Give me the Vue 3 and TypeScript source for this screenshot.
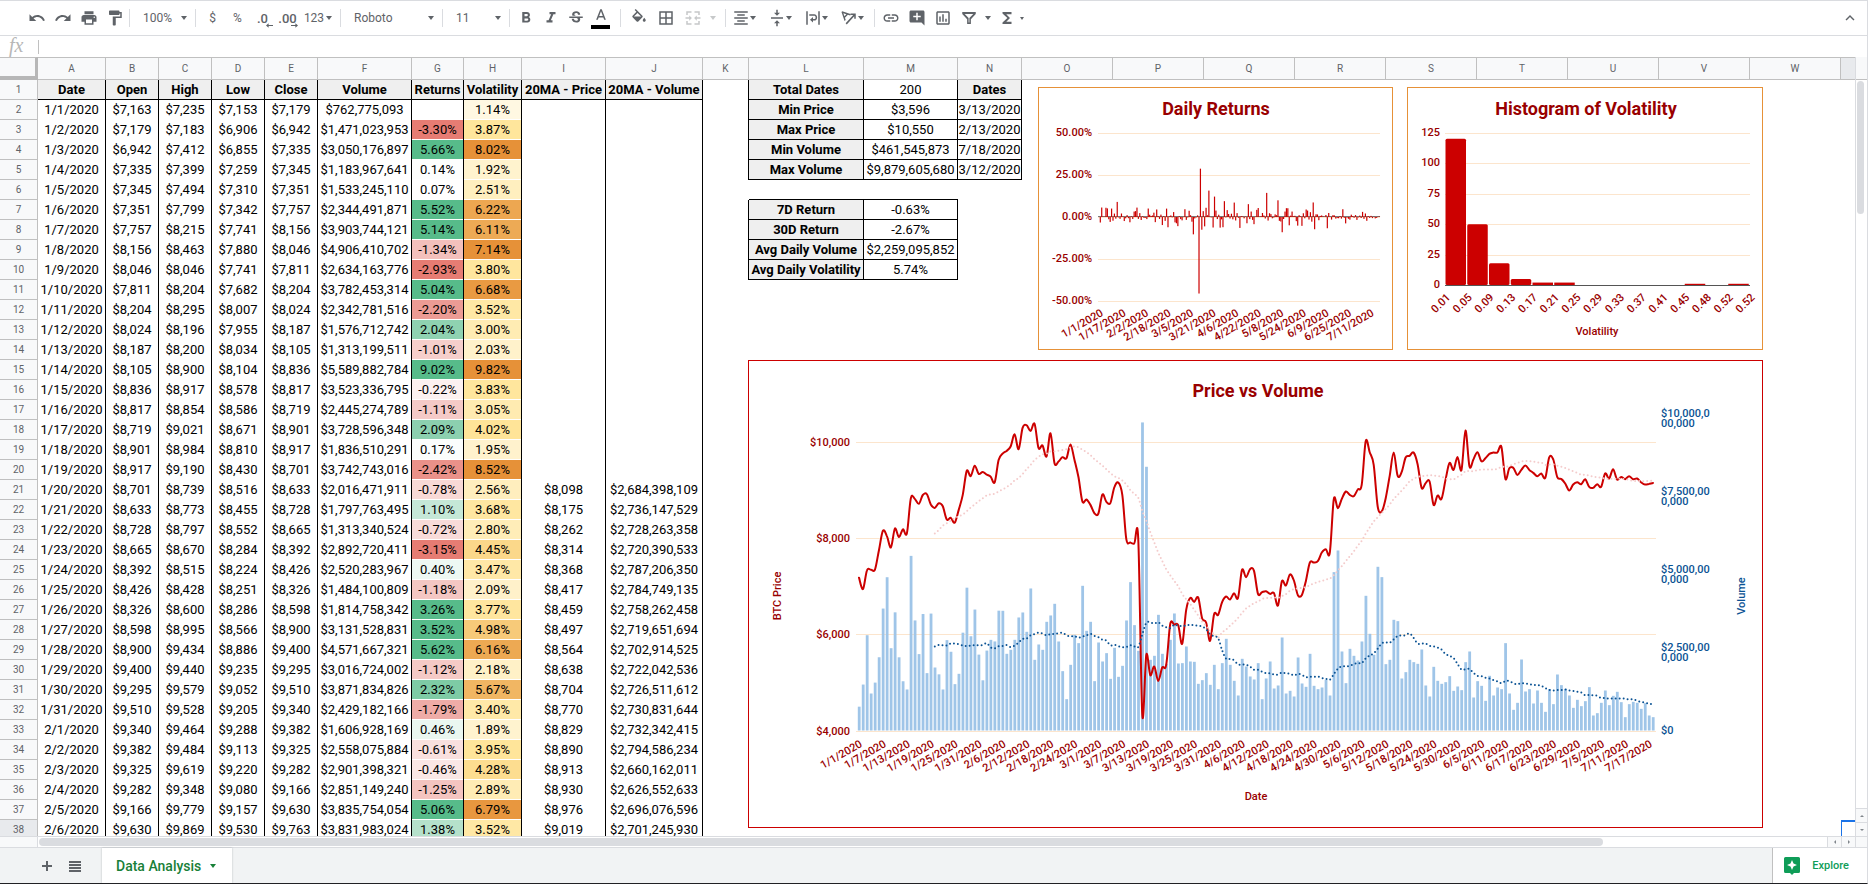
<script setup lang="ts">
interface Cell {
  text: string
  cls: string
  fill?: string
}

const columns = [
  { name: 'A', cls: 'w-date' },
  { name: 'B', cls: 'w-price' },
  { name: 'C', cls: 'w-price' },
  { name: 'D', cls: 'w-price' },
  { name: 'E', cls: 'w-price' },
  { name: 'F', cls: 'w-volume' },
  { name: 'G', cls: 'w-returns' },
  { name: 'H', cls: 'w-volatility' },
  { name: 'I', cls: 'w-ma-price' },
  { name: 'J', cls: 'w-ma-volume' },
  { name: 'K', cls: 'w-gap' },
  { name: 'L', cls: 'w-label' },
  { name: 'M', cls: 'w-volume' },
  { name: 'N', cls: 'w-dates' },
  ...'OPQRSTUVW'.split('').map((name) => ({ name, cls: 'w-plain' })),
  { name: '', cls: 'w-plain' },
]

// date, open, high, low, close, volume, return %, volatility %, 20-day price, 20-day volume
type Day = [string, number, number, number, number, number, number | null, number, number?, number?]

const days: Day[] = [
  ['1/1/2020', 7163, 7235, 7153, 7179, 762775093, null, 1.14],
  ['1/2/2020', 7179, 7183, 6906, 6942, 1471023953, -3.3, 3.87],
  ['1/3/2020', 6942, 7412, 6855, 7335, 3050176897, 5.66, 8.02],
  ['1/4/2020', 7335, 7399, 7259, 7345, 1183967641, 0.14, 1.92],
  ['1/5/2020', 7345, 7494, 7310, 7351, 1533245110, 0.07, 2.51],
  ['1/6/2020', 7351, 7799, 7342, 7757, 2344491871, 5.52, 6.22],
  ['1/7/2020', 7757, 8215, 7741, 8156, 3903744121, 5.14, 6.11],
  ['1/8/2020', 8156, 8463, 7880, 8046, 4906410702, -1.34, 7.14],
  ['1/9/2020', 8046, 8046, 7741, 7811, 2634163776, -2.93, 3.8],
  ['1/10/2020', 7811, 8204, 7682, 8204, 3782453314, 5.04, 6.68],
  ['1/11/2020', 8204, 8295, 8007, 8024, 2342781516, -2.2, 3.52],
  ['1/12/2020', 8024, 8196, 7955, 8187, 1576712742, 2.04, 3.0],
  ['1/13/2020', 8187, 8200, 8034, 8105, 1313199511, -1.01, 2.03],
  ['1/14/2020', 8105, 8900, 8104, 8836, 5589882784, 9.02, 9.82],
  ['1/15/2020', 8836, 8917, 8578, 8817, 3523336795, -0.22, 3.83],
  ['1/16/2020', 8817, 8854, 8586, 8719, 2445274789, -1.11, 3.05],
  ['1/17/2020', 8719, 9021, 8671, 8901, 3728596348, 2.09, 4.02],
  ['1/18/2020', 8901, 8984, 8810, 8917, 1836510291, 0.17, 1.95],
  ['1/19/2020', 8917, 9190, 8430, 8701, 3742743016, -2.42, 8.52],
  ['1/20/2020', 8701, 8739, 8516, 8633, 2016471911, -0.78, 2.56, 8098, 2684398109],
  ['1/21/2020', 8633, 8773, 8455, 8728, 1797763495, 1.1, 3.68, 8175, 2736147529],
  ['1/22/2020', 8728, 8797, 8552, 8665, 1313340524, -0.72, 2.8, 8262, 2728263358],
  ['1/23/2020', 8665, 8670, 8284, 8392, 2892720411, -3.15, 4.45, 8314, 2720390533],
  ['1/24/2020', 8392, 8515, 8224, 8426, 2520283967, 0.4, 3.47, 8368, 2787206350],
  ['1/25/2020', 8426, 8428, 8251, 8326, 1484100809, -1.18, 2.09, 8417, 2784749135],
  ['1/26/2020', 8326, 8600, 8286, 8598, 1814758342, 3.26, 3.77, 8459, 2758262458],
  ['1/27/2020', 8598, 8995, 8566, 8900, 3131528831, 3.52, 4.98, 8497, 2719651694],
  ['1/28/2020', 8900, 9434, 8886, 9400, 4571667321, 5.62, 6.16, 8564, 2702914525],
  ['1/29/2020', 9400, 9440, 9235, 9295, 3016724002, -1.12, 2.18, 8638, 2722042536],
  ['1/30/2020', 9295, 9579, 9052, 9510, 3871834826, 2.32, 5.67, 8704, 2726511612],
  ['1/31/2020', 9510, 9528, 9205, 9340, 2429182166, -1.79, 3.4, 8770, 2730831644],
  ['2/1/2020', 9340, 9464, 9288, 9382, 1606928169, 0.46, 1.89, 8829, 2732342415],
  ['2/2/2020', 9382, 9484, 9113, 9325, 2558075884, -0.61, 3.95, 8890, 2794586234],
  ['2/3/2020', 9325, 9619, 9220, 9282, 2901398321, -0.46, 4.28, 8913, 2660162011],
  ['2/4/2020', 9282, 9348, 9080, 9166, 2851149240, -1.25, 2.89, 8930, 2626552633],
  ['2/5/2020', 9166, 9779, 9157, 9630, 3835754054, 5.06, 6.79, 8976, 2696076596],
  ['2/6/2020', 9630, 9869, 9530, 9763, 3831983024, 1.38, 3.52, 9019, 2701245930],
]

const money = (n?: number) => (n === undefined ? '' : '$' + n.toLocaleString('en-US'))
const percent = (n: number) => n.toFixed(2) + '%'

function blend(a: number[], b: number[], t: number): string {
  const k = Math.min(1, Math.max(0, t))
  return `rgb(${a.map((v, i) => Math.round(v + (b[i] - v) * k)).join(', ')})`
}
const white = [255, 255, 255]
const returnFill = (n: number) =>
  n < 0.1 ? blend(white, [230, 124, 115], (0.1 - n) / 3) : blend(white, [87, 187, 138], (n - 0.1) / 2.9)
const volatilityFill = (n: number) =>
  n < 4
    ? blend(white, [255, 229, 153], n / 4)
    : blend([255, 229, 153], [230, 145, 56], (n - 4) / 3)

const headings = ['Date', 'Open', 'High', 'Low', 'Close', 'Volume', 'Returns', 'Volatility', '20MA - Price', '20MA - Volume']

const stats: Record<number, string[]> = {
  1: ['Total Dates', '200', 'Dates'],
  2: ['Min Price', '$3,596', '3/13/2020'],
  3: ['Max Price', '$10,550', '2/13/2020'],
  4: ['Min Volume', '$461,545,873', '7/18/2020'],
  5: ['Max Volume', '$9,879,605,680', '3/12/2020'],
  7: ['7D Return', '-0.63%'],
  8: ['30D Return', '-2.67%'],
  9: ['Avg Daily Volume', '$2,259,095,852'],
  10: ['Avg Daily Volatility', '5.74%'],
}

function buildRow(n: number): Cell[] {
  const cells: Cell[] = []
  if (n === 1) {
    headings.forEach((text) => cells.push({ text, cls: 'head edge-r edge-b' }))
  } else {
    const d = days[n - 2]
    cells.push({ text: d[0], cls: 'edge-r' })
    for (const v of [d[1], d[2], d[3], d[4], d[5]]) cells.push({ text: money(v), cls: 'edge-r' })
    cells.push(d[6] === null ? { text: '', cls: 'edge-r' } : { text: percent(d[6]), cls: 'edge-r filled', fill: returnFill(d[6]) })
    cells.push({ text: percent(d[7]), cls: 'edge-r filled', fill: volatilityFill(d[7]) })
    cells.push({ text: money(d[8]), cls: 'edge-r' })
    cells.push({ text: money(d[9]), cls: 'edge-r' })
  }
  const s = stats[n]
  cells.push({ text: '', cls: s ? 'edge-r' : '' })
  for (let i = 0; i < 3; i++) {
    if (s && s[i]) cells.push({ text: s[i], cls: 'edge-r edge-b' + (i === 0 || s[i] === 'Dates' ? ' head' : '') })
    else cells.push({ text: '', cls: n === 6 && i < 2 ? 'edge-b' : '' })
  }
  for (let i = 0; i < 10; i++) cells.push({ text: '', cls: n === 38 && i === 9 ? 'selected' : '' })
  return cells
}
const rows = Array.from({ length: 38 }, (_, i) => ({ n: i + 1, cells: buildRow(i + 1) }))

// Closing level per day after 2/6, in thirds of a pixel below the plot's upper edge
const closeLevels = [
  303, 290, 253, 298, 234, 226, 243, 222, 294, 287, 320, 250, 340, 335, 322, 325, 284, 330, 382, 455, 449, 465, 490, 491,
  434, 456, 459, 412, 398, 435, 568, 578, 581, 570, 1095, 915, 976, 950, 993, 953, 945, 823, 824, 826, 882, 780, 744,
  756, 743, 805, 818, 873, 793, 795, 757, 740, 749, 730, 744, 660, 682, 658, 663, 732, 727, 724, 732, 730, 767, 694,
  707, 674, 692, 736, 735, 693, 638, 638, 634, 608, 598, 608, 448, 475, 447, 425, 435, 439, 419, 405, 274, 307, 345,
  470, 485, 445, 378, 308, 378, 367, 323, 318, 308, 343, 414, 400, 395, 465, 437, 447, 390, 339, 360, 321, 360, 242,
  350, 328, 307, 334, 325, 312, 308, 308, 291, 387, 355, 354, 375, 360, 347, 360, 369, 379, 371, 384, 322, 329, 382,
  387, 401, 422, 404, 397, 403, 388, 411, 414, 403, 411, 371, 386, 358, 389, 381, 388, 379, 388, 386, 397, 404, 402,
  399,
]
// Volume per day after 2/6, where 937 steps stand for ten billion dollars
const volumeSteps = [
  230, 242, 272, 339, 354, 296, 426, 212, 258, 242, 326, 345, 380, 267, 178, 94, 197, 287, 262, 434, 299, 326, 148, 264,
  207, 232, 155, 248, 161, 194, 330, 445, 316, 239, 924, 791, 212, 224, 347, 230, 200, 272, 351, 201, 202, 252, 207,
  206, 140, 151, 172, 137, 197, 124, 202, 275, 197, 149, 105, 215, 192, 162, 153, 202, 94, 156, 207, 126, 135, 279, 111,
  119, 102, 219, 141, 131, 230, 134, 124, 129, 152, 105, 475, 540, 237, 142, 245, 224, 210, 267, 404, 290, 227, 491,
  460, 199, 212, 332, 328, 156, 175, 212, 205, 200, 243, 135, 102, 191, 149, 140, 145, 163, 119, 132, 121, 205, 237, 99,
  148, 134, 89, 164, 105, 129, 124, 262, 111, 62, 83, 213, 117, 124, 81, 120, 83, 56, 124, 79, 168, 136, 125, 105, 68,
  92, 73, 88, 130, 45, 52, 83, 120, 76, 104, 116, 85, 40, 79, 86, 83, 65, 82, 45, 40,
]

const prices = [...days.map((d) => d[4]), ...closeLevels.map((y) => 10000 - ((y - 277) / 288.3) * 2000)]
const volumes = [...days.map((d) => d[5] / 1e9), ...volumeSteps.map((v) => v / 93.7)]

const dayX = (i: number) => 859 + i * 3.99
const priceY = (p: number) => 730.5 - (p - 4000) * 0.04805
const volumeY = (v: number) => 730.5 - v * 31.24

type Point = [number, number]
function smooth(points: Point[]): string {
  let d = `M${points[0][0].toFixed(1)} ${points[0][1].toFixed(1)}`
  for (let i = 0; i < points.length - 1; i++) {
    const a = points[Math.max(0, i - 1)]
    const b = points[i]
    const c = points[i + 1]
    const e = points[Math.min(points.length - 1, i + 2)]
    d += `C${[b[0] + (c[0] - a[0]) / 6, b[1] + (c[1] - a[1]) / 6, c[0] - (e[0] - b[0]) / 6, c[1] - (e[1] - b[1]) / 6, c[0], c[1]]
      .map((v) => v.toFixed(1))
      .join(' ')}`
  }
  return d
}
function average(series: number[]): number[] {
  return series.slice(19).map((_, i) => series.slice(i, i + 20).reduce((s, v) => s + v, 0) / 20)
}
const pricePath = smooth(prices.map((p, i) => [dayX(i), priceY(p)] as Point))
const priceMaPath = smooth(average(prices).map((p, i) => [dayX(i + 19), priceY(p)] as Point))
const volumeMaPath = smooth(average(volumes).map((v, i) => [dayX(i + 19), volumeY(v)] as Point))

const dateLabel = (i: number) => {
  const d = new Date(Date.UTC(2020, 0, 1 + i))
  return `${d.getUTCMonth() + 1}/${d.getUTCDate()}/${d.getUTCFullYear()}`
}
const priceDates = Array.from({ length: 34 }, (_, k) => ({ text: dateLabel(k * 6), x: dayX(k * 6) + 4 }))
const priceTicks = [10000, 8000, 6000, 4000].map((v) => ({ text: money(v), y: Math.round(priceY(v)) }))
const volumeTicks = [
  { a: '$10,000,0', b: '00,000', y: 417 },
  { a: '$7,500,00', b: '0,000', y: 495 },
  { a: '$5,000,00', b: '0,000', y: 573 },
  { a: '$2,500,00', b: '0,000', y: 651 },
  { a: '$0', b: '', y: 734 },
]

const returnBars = prices.slice(1).map((p, i) => {
  const known = days[i + 1]?.[6]
  const r = known ?? (p / prices[i] - 1) * 100
  const h = Math.abs(r) * 1.674
  return { x: 1098.3 + (i + 1) * 1.41, y: r > 0 ? 217 - h : 217, h }
})
const returnTicks = [50, 25, 0, -25, -50].map((v, i) => ({ text: percent(v), y: 133 + i * 42 }))
const returnDates = Array.from({ length: 13 }, (_, k) => ({ text: dateLabel(k * 16), x: 1104 + k * 22.56 }))

const bins = [120.5, 50, 18, 5, 2, 2, 0, 0, 0, 0, 0, 1, 0, 1].map((v, i) => ({ x: 1445.5 + i * 21.75, h: v * 1.214 }))
const binTicks = [125, 100, 75, 50, 25, 0].map((v, i) => ({ text: String(v), y: 133 + Math.round(i * 30.4) }))
const binLabels = ['0.01', '0.05', '0.09', '0.13', '0.17', '0.21', '0.25', '0.29', '0.33', '0.37', '0.41', '0.45', '0.48', '0.52', '0.52']
  .map((text, i) => ({ text, x: 1451 + i * 21.75 }))

const icons: Record<string, string> = {
  Undo: 'M12.5 8c-2.65 0-5.05.99-6.9 2.6L2 7v9h9l-3.62-3.62c1.39-1.16 3.16-1.88 5.12-1.88 3.54 0 6.55 2.31 7.6 5.5l2.37-.78C21.08 11.03 17.15 8 12.5 8z',
  Redo: 'M18.4 10.6C16.55 8.99 14.15 8 11.5 8c-4.65 0-8.58 3.03-9.96 7.22L3.9 16c1.05-3.19 4.05-5.5 7.6-5.5 1.95 0 3.73.72 5.12 1.88L13 16h9V7l-3.6 3.6z',
  Print: 'M19 8H5c-1.66 0-3 1.34-3 3v6h4v4h12v-4h4v-6c0-1.66-1.34-3-3-3zm-3 11H8v-5h8v5zm3-7c-.55 0-1-.45-1-1s.45-1 1-1 1 .45 1 1-.45 1-1 1zm-1-9H6v4h12V3z',
  'Paint format': 'M18 4V3c0-.55-.45-1-1-1H5c-.55 0-1 .45-1 1v4c0 .55.45 1 1 1h12c.55 0 1-.45 1-1V6h1v4H9v11c0 .55.45 1 1 1h2c.55 0 1-.45 1-1v-9h8V4h-3z',
  Bold: 'M15.6 10.79c.97-.67 1.65-1.77 1.65-2.79 0-2.26-1.75-4-4-4H7v14h7.04c2.09 0 3.71-1.7 3.71-3.79 0-1.52-.86-2.82-2.15-3.42zM10 6.5h3c.83 0 1.5.67 1.5 1.5s-.67 1.5-1.5 1.5h-3v-3zm3.5 9H10v-3h3.5c.83 0 1.5.67 1.5 1.5s-.67 1.5-1.5 1.5z',
  Italic: 'M10 4v3h2.21l-3.42 8H6v3h8v-3h-2.21l3.42-8H18V4z',
  Strikethrough: 'M6.85 7.08C6.85 4.37 9.45 3 12.24 3c1.64 0 3 .49 3.9 1.28.77.65 1.46 1.73 1.46 3.24h-3.01c0-.31-.05-.59-.15-.85-.29-.86-1.2-1.28-2.25-1.28-1.86 0-2.34 1.02-2.34 1.7 0 .48.25.88.74 1.21.38.25.77.48 1.41.7H7.39c-.21-.34-.54-.89-.54-1.92zM21 12v-2H3v2h9.62c1.15.45 1.96.75 1.96 1.97 0 1-.81 1.67-2.28 1.67-1.54 0-2.93-.54-2.93-2.51H6.4c0 .55.08 1.13.24 1.58.81 2.29 3.29 3.3 5.67 3.3 2.27 0 5.3-.89 5.3-4.05 0-.3-.01-1.16-.48-1.94H21V12z',
  Fill: 'M16.56 8.94L7.62 0 6.21 1.41l2.38 2.38-5.15 5.15c-.59.59-.59 1.54 0 2.12l5.5 5.5c.29.29.68.44 1.06.44s.77-.15 1.06-.44l5.5-5.5c.59-.58.59-1.53 0-2.12zM5.21 10L10 5.21 14.79 10H5.21zM19 11.5s-2 2.17-2 3.5c0 1.1.9 2 2 2s2-.9 2-2c0-1.33-2-3.5-2-3.5z',
  Borders: 'M3 3v18h18V3H3zm8 16H5v-6h6v6zm0-8H5V5h6v6zm8 8h-6v-6h6v6zm0-8h-6V5h6v6z',
  'Horizontal align': 'M7 15v2h10v-2H7zm-4 6h18v-2H3v2zm0-8h18v-2H3v2zm4-6v2h10V7H7zM3 3v2h18V3H3z',
  'Vertical align': 'M8 19h3v4h2v-4h3l-4-4-4 4zm8-14h-3V1h-2v4H8l4 4 4-4zM4 11v2h16v-2H4z',
  'Text wrapping': 'M3 3h2v18H3zM19 3h2v18h-2zM7 7h6.5c2.5 0 4 1.8 4 4.2s-1.5 4.2-4 4.2H12V18l-4-3.6 4-3.6v2.6h1.5c1.3 0 2-.9 2-2.2s-.7-2.2-2-2.2H7z',
  'Text rotation': 'M2 4l1-1 12 4-1.5 1.5-3-1L6.6 11.5l1 3L6.1 16zM4.5 5.5l1.4 4 2.6-2.600zM9 20.5L19 9.5V13h2V6h-7v2h3.6L7.5 19z',
  'Insert link': 'M3.9 12c0-1.71 1.39-3.1 3.1-3.1h4V7H7c-2.76 0-5 2.24-5 5s2.24 5 5 5h4v-1.9H7c-1.71 0-3.1-1.39-3.1-3.1zM8 13h8v-2H8v2zm9-6h-4v1.9h4c1.71 0 3.1 1.39 3.1 3.1s-1.39 3.1-3.1 3.1h-4V17h4c2.76 0 5-2.24 5-5s-2.24-5-5-5z',
  'Insert comment': 'M21.99 4c0-1.1-.89-2-1.99-2H4c-1.1 0-2 .9-2 2v12c0 1.1.9 2 2 2h14l4 4-.01-18zM17 11h-4v4h-2v-4H7V9h4V5h2v4h4v2z',
  'Insert chart': 'M9 17H7v-7h2v7zm4 0h-2V7h2v10zm4 0h-2v-4h2v4zm2 2H5V5h14v14zm0-16H5c-1.1 0-2 .9-2 2v14c0 1.1.9 2 2 2h14c1.1 0 2-.9 2-2V5c0-1.1-.9-2-2-2z',
  Filter: 'M3 4h18v2.5l-6.5 7V20h-5v-6.5L3 6.5zM6.3 6.5l5.2 5.6v5.9h1v-5.9l5.2-5.6z',
  Functions: 'M18 4H6v2l6.5 6L6 18v2h12v-3h-7l5-5-5-5h7z',
}
const historyTools = ['Undo', 'Redo', 'Print', 'Paint format']
const styleTools = ['Bold', 'Italic', 'Strikethrough']
const alignTools = ['Horizontal align', 'Vertical align', 'Text wrapping', 'Text rotation']
const insertTools = ['Insert link', 'Insert comment', 'Insert chart', 'Filter']
</script>

<template>
  <div class="app">
    <header class="toolbar">
      <button v-for="t in historyTools" :key="t" class="tool wide" :aria-label="t">
        <svg class="icon" viewBox="0 0 24 24"><path :d="icons[t]" /></svg>
      </button>
      <i class="sep tight"></i>
      <label class="picker zoom"><select aria-label="Zoom"><option>100%</option></select><i class="caret"></i></label>
      <i class="sep"></i>
      <div class="group">
        <button class="tool text">$</button>
        <button class="tool text">%</button>
        <button class="tool text dec">.0<svg class="arrow" viewBox="0 0 8 5"><path d="M0 2.5L3 0v2h5v1H3v2z" /></svg></button>
        <button class="tool text dec">.00<svg class="arrow" viewBox="0 0 8 5"><path d="M8 2.5L5 0v2H0v1h5v2z" /></svg></button>
        <button class="tool formats">123<i class="caret"></i></button>
      </div>
      <i class="sep"></i>
      <label class="picker font"><select aria-label="Font"><option>Roboto</option></select><i class="caret"></i></label>
      <i class="sep"></i>
      <label class="picker size"><select aria-label="Font size"><option>11</option></select><i class="caret"></i></label>
      <i class="sep"></i>
      <div class="group style-group">
        <button v-for="t in styleTools" :key="t" class="tool" :aria-label="t">
          <svg class="icon" viewBox="0 0 24 24"><path :d="icons[t]" /></svg>
        </button>
        <button class="tool ink" aria-label="Text color">
          <svg class="icon" viewBox="0 0 24 24"><path d="M11 3L5.5 17h2.25l1.12-3h6.25l1.12 3h2.25L13 3h-2zm-1.38 9L12 5.67 14.38 12H9.62z" /></svg>
          <i class="ink-bar"></i>
        </button>
      </div>
      <i class="sep"></i>
      <div class="group">
        <button class="tool roomy" aria-label="Fill color"><svg class="icon" viewBox="0 0 24 24"><path :d="icons.Fill" /></svg></button>
        <button class="tool roomy" aria-label="Borders"><svg class="icon" viewBox="0 0 24 24"><path :d="icons.Borders" /></svg></button>
        <button class="tool roomy faded" aria-label="Merge cells" disabled>
          <svg class="icon" viewBox="0 0 24 24">
            <path d="M3 3h7v2H5v3H3zM14 3h7v5h-2V5h-5zM3 16h2v3h5v2H3zM19 16h2v5h-7v-2h5zM2 11h5V8.5l3.5 3.5L7 15.5V13H2zM22 11h-5V8.5L13.5 12l3.5 3.5V13h5z" />
          </svg>
        </button>
        <i class="caret faded merge-caret"></i>
      </div>
      <i class="sep"></i>
      <div class="group">
        <button v-for="t in alignTools" :key="t" class="tool paired" :aria-label="t">
          <svg class="icon" viewBox="0 0 24 24"><path :d="icons[t]" /></svg><i class="caret"></i>
        </button>
      </div>
      <i class="sep"></i>
      <div class="group insert-group">
        <button v-for="t in insertTools" :key="t" class="tool wide" :aria-label="t">
          <svg class="icon" viewBox="0 0 24 24"><path :d="icons[t]" /></svg>
        </button>
        <i class="caret filter-caret"></i>
        <button class="tool wide" aria-label="Functions"><svg class="icon" viewBox="0 0 24 24"><path :d="icons.Functions" /></svg></button>
        <i class="caret small"></i>
      </div>
      <button class="tool wide collapse" aria-label="Hide the menus">
        <svg class="icon" viewBox="0 0 24 24"><path d="M12 8l-6 6 1.41 1.41L12 10.83l4.59 4.58L18 14z" /></svg>
      </button>
    </header>

    <div class="formula">
      <label class="fx" for="formula-input">fx</label>
      <input id="formula-input" type="text" />
    </div>

    <main class="body">
      <div class="sheet">
        <table>
          <colgroup>
            <col class="w-row" />
            <col v-for="c in columns" :key="c.name" :class="c.cls" />
          </colgroup>
          <thead>
            <tr>
              <td class="corner"></td>
              <th v-for="c in columns" :key="c.name" scope="col" :class="{ current: c.name === '' }">{{ c.name }}</th>
            </tr>
          </thead>
          <tbody>
            <tr v-for="r in rows" :key="r.n">
              <th scope="row" :class="{ current: r.n === 38 }">{{ r.n }}</th>
              <td v-for="(c, i) in r.cells" :key="i" :class="c.cls" :style="c.fill ? { backgroundColor: c.fill } : undefined">{{ c.text }}</td>
            </tr>
          </tbody>
        </table>

        <section class="chart returns">
          <svg viewBox="1039 88 353 261">
            <text class="title" x="1216" y="115" text-anchor="middle">Daily Returns</text>
            <g v-for="t in returnTicks" :key="t.text">
              <rect class="rule" x="1098" :y="t.y" width="282" height="1" />
              <text x="1092" :y="t.y + 3" text-anchor="end">{{ t.text }}</text>
            </g>
            <rect x="1098" y="216" width="282" height="1" fill="#777" />
            <rect v-for="(b, i) in returnBars" :key="i" class="bar-red" :x="b.x" :y="b.y" width="1.2" :height="b.h" />
            <text v-for="d in returnDates" :key="d.text" text-anchor="end" :transform="`translate(${d.x} 315) rotate(-30)`">{{ d.text }}</text>
          </svg>
        </section>

        <section class="chart histogram">
          <svg viewBox="1408 88 354 261">
            <text class="title" x="1586" y="115" text-anchor="middle">Histogram of Volatility</text>
            <g v-for="t in binTicks" :key="t.text">
              <rect class="rule" x="1445" :y="t.y" width="305" height="1" />
              <text x="1440" :y="t.y + 3" text-anchor="end">{{ t.text }}</text>
            </g>
            <rect v-for="(b, i) in bins" :key="i" class="bar-red" :x="b.x" :y="285 - b.h" width="20.5" :height="b.h" :rx="b.h > 3 ? 1.5 : 0" />
            <rect x="1445" y="285" width="305" height="1" fill="#555" />
            <text v-for="(l, i) in binLabels" :key="i" text-anchor="end" :transform="`translate(${l.x} 298) rotate(-45)`">{{ l.text }}</text>
            <text x="1597" y="335" text-anchor="middle">Volatility</text>
          </svg>
        </section>

        <section class="chart price">
          <svg viewBox="749 361 1013 466">
            <text class="title" x="1258" y="397" text-anchor="middle">Price vs Volume</text>
            <g v-for="t in priceTicks" :key="t.text">
              <rect class="rule" x="856" :y="t.y" width="800" height="1" />
              <text x="850" :y="t.y + 4" text-anchor="end">{{ t.text }}</text>
            </g>
            <rect v-for="(v, i) in volumes" :key="i" class="bar-blue" :x="dayX(i) - 1.2" :y="volumeY(v)" width="2.8" :height="730.5 - volumeY(v)" />
            <path class="line-price" :d="pricePath" />
            <path class="line-price-ma" :d="priceMaPath" />
            <path class="line-volume-ma" :d="volumeMaPath" />
            <text v-for="d in priceDates" :key="d.text" text-anchor="end" :transform="`translate(${d.x} 746) rotate(-30)`">{{ d.text }}</text>
            <g class="blue">
              <template v-for="t in volumeTicks" :key="t.a">
                <text x="1661" :y="t.y">{{ t.a }}</text>
                <text v-if="t.b" x="1661" :y="t.y + 10">{{ t.b }}</text>
              </template>
              <text text-anchor="middle" transform="translate(1745 596) rotate(-90)">Volume</text>
            </g>
            <text text-anchor="middle" transform="translate(781 596) rotate(-90)">BTC Price</text>
            <text x="1256" y="800" text-anchor="middle">Date</text>
          </svg>
        </section>
      </div>
      <div class="vscroll">
        <div class="vscroll-head"></div>
        <div class="vtrack"><div class="vthumb"></div></div>
        <button class="step" aria-label="Scroll up"><i class="tri up"></i></button>
        <button class="step" aria-label="Scroll down"><i class="tri down"></i></button>
      </div>
    </main>

    <div class="hscroll">
      <div class="hscroll-head"></div>
      <div class="htrack"><div class="hthumb"></div></div>
      <button class="hstep" aria-label="Scroll left"><i class="tri left"></i></button>
      <button class="hstep" aria-label="Scroll right"><i class="tri right"></i></button>
      <div class="hscroll-end"></div>
    </div>

    <footer class="tabs">
      <button class="tab-tool" aria-label="Add sheet"><svg viewBox="0 0 12 12"><path d="M5 1h2v4h4v2H7v4H5V7H1V5h4z" /></svg></button>
      <button class="tab-tool list" aria-label="All sheets"><svg viewBox="0 0 12 12"><path d="M0 1h12v2H0zM0 4h12v2H0zM0 7h12v2H0zM0 10h12v2H0z" /></svg></button>
      <button class="tab">Data Analysis<i class="caret green"></i></button>
      <button class="explore">
        <svg viewBox="0 0 16 18"><path fill="#0f9d58" d="M1.5 0h13A1.5 1.5 0 0 1 16 1.5v13a1.5 1.5 0 0 1-1.5 1.5H10l-2 2-2-2H1.5A1.5 1.5 0 0 1 0 14.5v-13A1.5 1.5 0 0 1 1.5 0z" /><path fill="#fff" d="M8 3l1.5 3.5L13 8 9.5 9.5 8 13 6.5 9.5 3 8l3.5-1.5z" /></svg>
        Explore
      </button>
    </footer>
  </div>
</template>

<style>
body {
  margin: 0;
  overflow: hidden;
}
</style>

<style scoped>
.app {
  display: flex;
  flex-direction: column;
  box-sizing: border-box;
  height: 100vh;
  margin-right: 2px;
  border-top: 1px solid #dadce0;
  border-right: 1px solid #dadce0;
  border-bottom: 1px solid #202124;
  background: #fff;
  font-family: Roboto, "Liberation Sans", sans-serif;
  color: #000;
}
button,
select,
input {
  margin: 0;
  padding: 0;
  border: 0;
  background: none;
  color: inherit;
  font: inherit;
}
.toolbar {
  display: flex;
  align-items: center;
  flex: none;
  height: 34px;
  padding-left: 24px;
  padding-right: 4px;
  border-bottom: 1px solid #dadce0;
  color: #5f6368;
  font-size: 12px;
}
.group {
  display: flex;
  align-items: center;
  padding-left: 4px;
}
.style-group {
  padding-left: 3px;
  padding-right: 7px;
}
.insert-group {
  padding-left: 3px;
}
.tool {
  display: flex;
  align-items: center;
  justify-content: center;
  position: relative;
  flex: none;
  width: 25px;
  height: 26px;
}
.tool.wide {
  width: 26px;
}
.tool.roomy {
  width: 27px;
}
.tool.formats {
  width: 40px;
  gap: 2px;
  padding-right: 4px;
}
.tool.paired {
  width: 36px;
  justify-content: flex-start;
  padding-left: 2px;
}
.faded {
  opacity: 0.35;
}
.icon {
  width: 18px;
  height: 18px;
  fill: #5f6368;
}
.tool.dec {
  font-size: 13px;
  font-weight: 500;
}
.arrow {
  position: absolute;
  right: 2px;
  bottom: 3px;
  width: 7px;
  height: 5px;
  fill: #5f6368;
}
.ink-bar {
  position: absolute;
  left: 3px;
  bottom: 2px;
  width: 19px;
  height: 4px;
  background: #000;
}
.ink .icon {
  margin-bottom: 4px;
}
.sep {
  flex: none;
  width: 1px;
  height: 18px;
  background: #dadce0;
}
.sep.tight {
  margin-left: 1px;
}
.caret {
  flex: none;
  width: 0;
  height: 0;
  border: 3px solid transparent;
  border-top: 4px solid #5f6368;
  border-bottom: 0;
}
.caret.green {
  border-top-color: #188038;
}
.caret.small {
  border-width: 2px;
  border-top-width: 3px;
  border-bottom: 0;
}
.merge-caret {
  margin: 0 9px 0 4px;
}
.filter-caret {
  margin: 0 3px;
}
.picker {
  display: flex;
  align-items: center;
  box-sizing: border-box;
  flex: none;
  padding: 0 8px 0 13px;
}
.picker select {
  flex: 1;
  min-width: 0;
  appearance: none;
}
.picker.zoom {
  width: 65px;
}
.picker.font {
  width: 101px;
}
.picker.size {
  width: 66px;
}
.collapse {
  margin-left: auto;
}
.formula {
  display: flex;
  align-items: center;
  flex: none;
  height: 21px;
}
.fx {
  box-sizing: border-box;
  width: 38px;
  padding-left: 9px;
  padding-bottom: 4px;
  color: #b7b7b7;
  font: italic 20px/18px "Liberation Serif", serif;
}
.formula input {
  flex: 1;
  height: 14px;
  padding-left: 6px;
  border-left: 1px solid #c0c0c0;
  outline: 0;
}
.body {
  display: flex;
  flex: 1;
  min-height: 0;
}
.sheet {
  position: relative;
  flex: 1;
  min-width: 0;
  overflow: hidden;
}
table {
  width: 1916px;
  border-spacing: 0;
  table-layout: fixed;
}
.w-row { width: 38px; }
.w-date { width: 68px; }
.w-price { width: 53px; }
.w-volume { width: 94px; }
.w-returns { width: 52px; }
.w-volatility { width: 58px; }
.w-ma-price { width: 84px; }
.w-ma-volume { width: 97px; }
.w-gap { width: 46px; }
.w-label { width: 115px; }
.w-dates { width: 64px; }
.w-plain { width: 91px; }
th,
td {
  box-sizing: border-box;
  height: 20px;
  padding: 0;
  overflow: hidden;
  white-space: nowrap;
  text-align: center;
  vertical-align: top;
  line-height: 19px;
}
td {
  font-size: 13px;
}
th {
  background: #f8f9fa;
  border-right: 1px solid #c0c0c0;
  border-bottom: 1px solid #c0c0c0;
  color: #5f6368;
  font-size: 10px;
  font-weight: 400;
}
thead th,
.corner {
  height: 23px;
  border-top: 1px solid #c0c0c0;
  line-height: 21px;
}
th.current {
  background: #e8eaed;
}
.corner {
  background: #f8f9fa;
  border-right: 3px solid #b7b7b7;
  border-bottom: 4px solid #b7b7b7;
}
.head {
  background-color: #efefef;
  font-weight: 700;
}
.edge-r {
  border-right: 1px solid #000;
}
.edge-b {
  border-bottom: 1px solid #000;
}
.filled {
  box-shadow: inset 0 -1px #fff;
}
.selected {
  background: linear-gradient(#1a73e8, #1a73e8) top / 100% 2px no-repeat, linear-gradient(#1a73e8, #1a73e8) left / 1px 100% no-repeat;
}
.chart {
  position: absolute;
  box-sizing: border-box;
  background: #fff;
  border: 1px solid #e69138;
}
.chart svg {
  display: block;
  width: 100%;
  height: 100%;
  fill: #990000;
  font-size: 11px;
  font-weight: 500;
}
.chart .title {
  font-size: 18px;
  font-weight: 700;
}
.returns {
  left: 1038px;
  top: 30px;
  width: 355px;
  height: 263px;
}
.histogram {
  left: 1407px;
  top: 30px;
  width: 356px;
  height: 263px;
}
.price {
  left: 748px;
  top: 303px;
  width: 1015px;
  height: 468px;
  border-color: #cc0000;
}
.rule {
  fill: #fce5cd;
}
.bar-red {
  fill: #cc0000;
}
.bar-blue {
  fill: #9fc5e8;
}
.blue {
  fill: #0b5394;
}
.line-price,
.line-price-ma,
.line-volume-ma {
  fill: none;
  stroke: #cc0000;
  stroke-width: 2;
  stroke-linejoin: round;
  stroke-linecap: round;
}
.line-price-ma {
  stroke: #f4cccc;
  stroke-dasharray: 0 4;
}
.line-volume-ma {
  stroke: #0b5394;
  stroke-dasharray: 0 4;
}
.vscroll {
  display: flex;
  flex-direction: column;
  flex: none;
  box-sizing: border-box;
  width: 12px;
  border-left: 1px solid #dadce0;
}
.vscroll-head {
  height: 22px;
  border-bottom: 1px solid #c0c0c0;
  background: #f8f9fa;
}
.vtrack {
  flex: 1;
  padding: 1px 3px 1px 1px;
}
.vthumb {
  height: 133px;
  border-radius: 4px;
  background: #dadce0;
}
.step {
  display: flex;
  align-items: center;
  justify-content: center;
  height: 14px;
  box-sizing: border-box;
  border-top: 1px solid #dadce0;
  background: #f8f9fa;
}
.tri {
  width: 0;
  height: 0;
  border: 2px solid transparent;
}
.tri.up {
  border-bottom-color: #80868b;
  border-top: 0;
}
.tri.down {
  border-top-color: #80868b;
  border-bottom: 0;
}
.tri.left {
  border-right-color: #80868b;
  border-left: 0;
}
.tri.right {
  border-left-color: #80868b;
  border-right: 0;
}
.hscroll {
  display: flex;
  flex: none;
  box-sizing: border-box;
  height: 11px;
  border-top: 1px solid #dadce0;
}
.hscroll-head {
  width: 37px;
  border-right: 1px solid #dadce0;
  background: #f8f9fa;
}
.htrack {
  flex: 1;
  padding: 1px;
}
.hthumb {
  width: 87.5%;
  height: 8px;
  border-radius: 4px;
  background: #dadce0;
}
.hstep {
  display: flex;
  align-items: center;
  justify-content: center;
  width: 14px;
  box-sizing: border-box;
  border-left: 1px solid #dadce0;
  background: #f8f9fa;
}
.hscroll-end {
  width: 11px;
  border-left: 1px solid #dadce0;
  background: #f8f9fa;
}
.tabs {
  display: flex;
  align-items: stretch;
  flex: none;
  box-sizing: border-box;
  height: 36px;
  padding-left: 32px;
  border-top: 1px solid #dadce0;
  background: #f1f3f4;
}
.tab-tool {
  display: flex;
  align-items: center;
  justify-content: center;
  width: 29px;
}
.tab-tool.list {
  width: 27px;
}
.tab-tool svg {
  width: 12px;
  height: 12px;
  fill: #5f6368;
}
.tab {
  display: flex;
  align-items: center;
  gap: 9px;
  margin-left: 14px;
  padding: 0 16px 0 14px;
  background: #fff;
  box-shadow: 0 0 2px rgba(60, 64, 67, 0.3);
  color: #188038;
  font-size: 14px;
  font-weight: 500;
}
.explore {
  display: flex;
  align-items: center;
  gap: 12px;
  margin-left: auto;
  padding: 0 18px 0 11px;
  border-left: 1px solid #c0c0c0;
  background: #fff;
  color: #0f9d58;
  font-size: 11px;
  font-weight: 500;
}
.explore svg {
  width: 16px;
  height: 18px;
}
</style>
